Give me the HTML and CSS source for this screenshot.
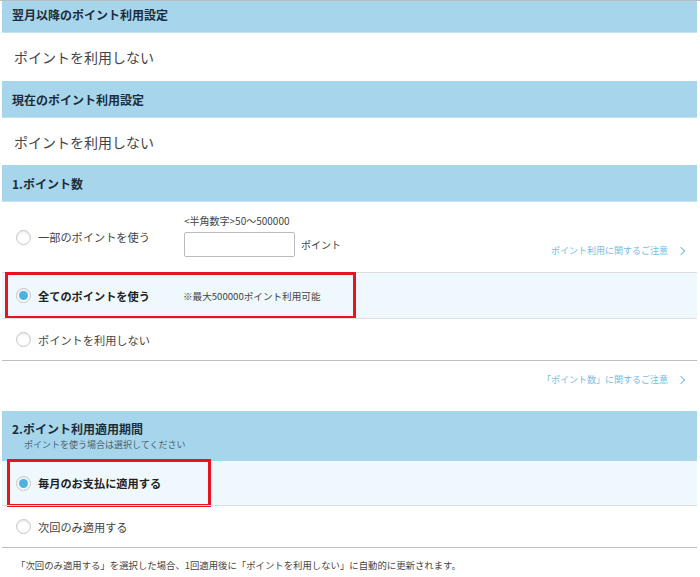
FILE: index.html
```html
<!DOCTYPE html>
<html lang="ja">
<head>
<meta charset="utf-8">
<link rel="stylesheet" href="styles.css">
</head>
<body>
<div class="page">
  <div class="head head-first">翌月以降のポイント利用設定</div>
  <div class="value">ポイントを利用しない</div>
  <div class="head">現在のポイント利用設定</div>
  <div class="value value-2">ポイントを利用しない</div>
  <div class="head">1.ポイント数</div>

  <div class="opts">
    <div class="opt opt-some">
      <span class="radio"></span>
      <span class="label">一部のポイントを使う</span>
      <div class="amount">
        <div class="hint">&lt;半角数字&gt;50～500000</div>
        <div class="amount-row">
          <span class="input"></span>
          <span class="unit">ポイント</span>
        </div>
      </div>
      <a class="link link-inrow">ポイント利用に関するご注意<span class="chev"></span></a>
    </div>
    <div class="opt opt-sel">
      <span class="radio on"></span>
      <span class="label bold">全てのポイントを使う</span>
      <span class="note">※最大500000ポイント利用可能</span>
      <span class="mark mark-1"></span>
    </div>
    <div class="opt opt-plain">
      <span class="radio"></span>
      <span class="label">ポイントを利用しない</span>
    </div>
  </div>
  <div class="link-row"><a class="link">「ポイント数」に関するご注意<span class="chev"></span></a></div>

  <div class="head head-tall">
    <div>2.ポイント利用適用期間</div>
    <div class="sub">ポイントを使う場合は選択してください</div>
  </div>
  <div class="opts">
    <div class="opt opt-sel opt-sel2">
      <span class="radio on"></span>
      <span class="label bold">毎月のお支払に適用する</span>
      <span class="mark mark-2"></span>
    </div>
    <div class="opt opt-plain">
      <span class="radio"></span>
      <span class="label">次回のみ適用する</span>
    </div>
  </div>
  <p class="foot">「次回のみ適用する」を選択した場合、1回適用後に「ポイントを利用しない」に自動的に更新されます。</p>
</div>
</body>
</html>
```
FILE: styles.css
```css
html, body {
  margin: 0;
  padding: 0;
  background: #fff;
}
body {
  border-top: 1px solid #b9bdc0;
  font-family: "Noto Sans CJK JP", "Noto Sans", sans-serif;
  color: #444;
}
.page {
  padding: 0 3px 0 2px;
}
.head {
  background: #a7d6ec;
  color: #1b2d3b;
  font-weight: bold;
  font-size: 12px;
  height: 37px;
  display: flex;
  align-items: center;
  padding-left: 10px;
  box-sizing: border-box;
  border-bottom: 1px solid #c3e3f2;
}
.head-first {
  height: 32px;
  padding-bottom: 5px;
}
.head-tall {
  height: 50px;
  flex-direction: column;
  align-items: flex-start;
  justify-content: flex-start;
  padding-top: 9px;
  border-bottom: none;
}
.head-tall .sub {
  font-weight: normal;
  font-size: 9px;
  color: #4a6272;
  padding-left: 12px;
  margin-top: 1px;
}
.value {
  height: 48px;
  box-sizing: border-box;
  display: flex;
  align-items: center;
  padding-left: 12px;
  font-size: 14px;
  color: #444;
}
.value-2 {
  height: 47px;
}
.opts {
  border-bottom: 1px solid #bdbdbd;
}
.opt {
  position: relative;
  display: flex;
  align-items: center;
  padding-left: 14px;
  box-sizing: border-box;
  font-size: 11.2px;
  color: #444;
}
.opt + .opt {
  border-top: 1px solid #dedede;
}
.opt-some {
  height: 70px;
}
.opt-sel {
  height: 46px;
  background: #eef8fd;
}
.opt-sel2 {
  height: 44px;
}
.opt-plain {
  height: 42px;
}
.radio {
  width: 15px;
  height: 15px;
  border-radius: 50%;
  border: 1px solid #c6c6c6;
  background: #fff;
  box-shadow: inset 0 1px 2px rgba(0,0,0,0.12);
  box-sizing: border-box;
  flex: none;
  display: flex;
  align-items: center;
  justify-content: center;
}
.radio.on::after {
  content: "";
  width: 9px;
  height: 9px;
  border-radius: 50%;
  background: #4db1e2;
}
.label {
  margin-left: 7px;
  width: 146px;
  flex: none;
}
.bold {
  font-weight: bold;
  color: #222;
}
.amount {
  display: flex;
  flex-direction: column;
  margin-top: -4px;
}
.hint {
  font-size: 10px;
  color: #444;
  margin-bottom: 4px;
}
.amount-row {
  display: flex;
  align-items: center;
}
.input {
  width: 111px;
  height: 25px;
  border: 1px solid #bbb;
  border-radius: 2px;
  box-sizing: border-box;
  background: #fff;
}
.unit {
  font-size: 10px;
  margin-left: 6px;
  color: #444;
}
.note {
  font-size: 9.6px;
  color: #444;
  margin-left: -1px;
}
.link {
  color: #72bde6;
  font-size: 9px;
  display: inline-flex;
  align-items: center;
  text-decoration: none;
}
.chev {
  width: 5px;
  height: 5px;
  border-top: 1px solid #72bde6;
  border-right: 1px solid #72bde6;
  transform: rotate(45deg);
  margin-left: 10px;
}
.link-inrow {
  margin-left: auto;
  align-self: flex-end;
  margin-bottom: 15px;
  margin-right: 13px;
}
.link-row {
  height: 50px;
  display: flex;
  justify-content: flex-end;
  align-items: flex-start;
  padding-top: 12px;
  padding-right: 13px;
  box-sizing: border-box;
}
.mark {
  position: absolute;
  border: 3px solid #e5141d;
  box-sizing: border-box;
  pointer-events: none;
}
.mark-1 {
  left: 3px;
  top: -1px;
  width: 351px;
  height: 47px;
}
.mark-2 {
  left: 5px;
  top: -2px;
  width: 204px;
  height: 48px;
}
.foot {
  margin: 0;
  padding: 10px 0 0 14px;
  font-size: 9.4px;
  color: #444;
}
```
